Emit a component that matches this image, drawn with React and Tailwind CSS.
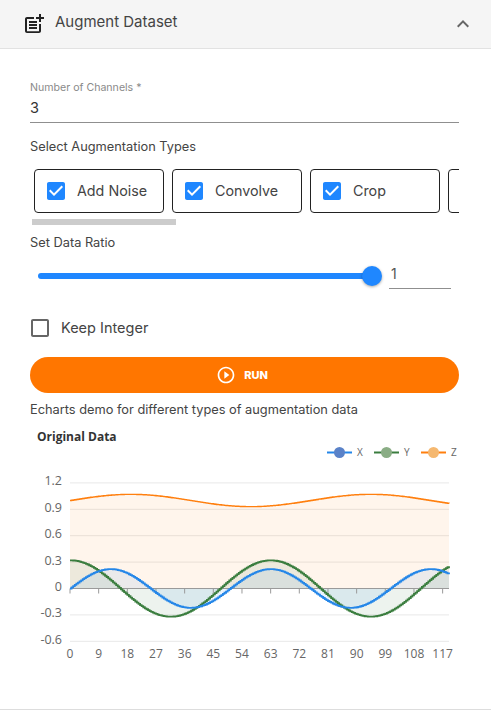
const X0 = 70;
const Y0 = 588.5;
const UNIT_X = 379 / 119;
const UNIT_Y = 88;

const toX = (i) => X0 + i * UNIT_X;
const toY = (v) => Y0 - v * UNIT_Y;

const series = [
  { name: "Z", fn: (i) => 1 + 0.07 * Math.sin(i / 12), line: "#ff7f0e", dot: "#f5b870", fill: "rgba(255,127,14,0.08)", width: 1.4 },
  { name: "Y", fn: (i) => 0.32 * Math.cos(i / 10), line: "#3a7d3e", dot: "#8aad85", fill: "rgba(58,125,62,0.09)", width: 1.8 },
  { name: "X", fn: (i) => 0.22 * Math.sin(i / 8), line: "#2486e8", dot: "#5a82c8", fill: "rgba(36,134,232,0.09)", width: 1.8 },
];

function stepPath(fn) {
  let d = `M${toX(0)} ${toY(fn(0))}`;
  for (let i = 0.5; i <= 119; i += 0.5) {
    d += `H${toX(i)}V${toY(fn(i))}`;
  }
  return d;
}

function Chart() {
  const yTicks = [1.2, 0.9, 0.6, 0.3, -0.3, -0.6];
  const xTicks = [];
  for (let i = 0; i <= 117; i += 9) xTicks.push(i);

  return (
    <svg width="491" height="256" viewBox="0 425 491 256" className="block">
      <text x="37" y="441" fontSize="12" fontWeight="700" fill="#333" fontFamily="'Open Sans', sans-serif">
        Original Data
      </text>

      {[{ s: series[2], x: 327 }, { s: series[1], x: 374 }, { s: series[0], x: 421 }].map(({ s, x }) => (
        <g key={s.name}>
          <line x1={x} x2={x + 25} y1="452.5" y2="452.5" stroke={s.line} strokeWidth="2" />
          <circle cx={x + 12.5} cy="452.5" r="5.5" fill={s.dot} />
          <text x={x + 30} y="455.5" fontSize="10" fill="#666" fontFamily="'Open Sans', sans-serif">
            {s.name}
          </text>
        </g>
      ))}

      {yTicks.map((v) => (
        <line key={v} x1={X0} x2="449" y1={toY(v)} y2={toY(v)} stroke="#e8e8e8" />
      ))}

      {series.map((s) => (
        <path key={s.name} d={`${stepPath(s.fn)}V${Y0}H${X0}Z`} fill={s.fill} />
      ))}

      <line x1={X0} x2="449" y1={Y0} y2={Y0} stroke="#9a9a9a" />
      {xTicks.map((i) => (
        <line key={i} x1={toX(i)} x2={toX(i)} y1={Y0} y2={Y0 + 5} stroke="#9a9a9a" />
      ))}

      {series.map((s) => (
        <path key={s.name} d={stepPath(s.fn)} fill="none" stroke={s.line} strokeWidth={s.width} />
      ))}

      {[1.2, 0.9, 0.6, 0.3, 0, -0.3, -0.6].map((v) => (
        <text key={v} x="62" y={toY(v) - 2 + 4.5} textAnchor="end" fontSize="12.5" fill="#666" fontFamily="'Open Sans', sans-serif">
          {v}
        </text>
      ))}
      {xTicks.map((i) => (
        <text key={i} x={toX(i)} y="658" textAnchor="middle" fontSize="12" fill="#666" fontFamily="'Open Sans', sans-serif">
          {i}
        </text>
      ))}
    </svg>
  );
}

function TypeCard({ label }) {
  return (
    <div className="flex h-[44px] w-[130px] shrink-0 items-center rounded-[4px] border border-[#222] pl-[9px]">
      <svg width="24" height="24" viewBox="0 0 24 24" fill="#1f87ff">
        <path d="M19 3H5c-1.11 0-2 .9-2 2v14c0 1.1.89 2 2 2h14c1.11 0 2-.9 2-2V5c0-1.1-.89-2-2-2zm-9 14l-5-5 1.41-1.41L10 14.17l7.59-7.59L19 8l-9 9z" />
      </svg>
      <span className="ml-[9px] text-[14.3px] text-[#444]">{label}</span>
    </div>
  );
}

export default function App() {
  return (
    <div className="h-[710px] w-[491px] overflow-hidden border-b border-[#ddd] bg-white [font-family:Inter,sans-serif]">
      <div className="flex h-[49px] items-center border-b border-[#e2e2e2] bg-[#f5f5f5] pl-[22px] pr-[16px]">
        <svg width="24" height="24" viewBox="0 0 24 24" fill="#222">
          <path d="M17 19.22H5V7h7V5H5c-1.1 0-2 .9-2 2v12c0 1.1.9 2 2 2h12c1.1 0 2-.9 2-2v-7h-2v7.22zM19 2h-2v3h-3c.01.01 0 2 0 2h3v2.99c.01.01 2 0 2 0V7h3V5h-3V2zM7 9h8v2H7zM7 12v2h8v-2h-3zM7 15h8v2H7z" />
        </svg>
        <span className="ml-[9px] flex-1 pb-[3px] text-[15px] text-[#444]">Augment Dataset</span>
        <svg width="24" height="24" viewBox="0 0 24 24" fill="#666">
          <path d="M12 8l-6 6 1.41 1.41L12 10.83l4.59 4.58L18 14z" />
        </svg>
      </div>

      <div className="px-[30px] pr-[32px]">
        <div className="mt-[32px] border-b border-[#8f8f8f] pb-[4px]">
          <div className="text-[10.6px] leading-[14px] text-[#8a8a8a]">Number of Channels *</div>
          <div className="mt-[3px] text-[14.5px] leading-[20px] text-[#333]">3</div>
        </div>

        <div className="mt-[16px] text-[12.8px] leading-[16px] text-[#444]">Select Augmentation Types</div>

        <div className="mt-[14px] flex gap-[8px] overflow-hidden pl-[4px]">
          <TypeCard label="Add Noise" />
          <TypeCard label="Convolve" />
          <TypeCard label="Crop" />
          <TypeCard label="" />
        </div>
        <div className="ml-[2px] mt-[6px] h-[6px] w-[144px] bg-[#cccccc]" />

        <div className="mt-[10px] text-[12.8px] leading-[16px] text-[#444]">Set Data Ratio</div>

        <div className="mt-[8px] flex items-start">
          <div className="relative mt-[14px] ml-[8px] h-[6px] w-[335px] rounded-full bg-[#1f87ff]">
            <div className="absolute right-[-9px] top-[-7px] h-[20px] w-[20px] rounded-full bg-[#1f87ff] shadow-[0_1px_3px_rgba(0,0,0,0.35)]" />
          </div>
          <div className="ml-[16px] h-[30px] w-[62px] border-b border-[#8f8f8f] pl-[2px] pt-[5px] text-[14px] leading-[20px] text-[#555]">
            1
          </div>
        </div>

        <div className="mt-[27px] flex items-center">
          <svg width="24" height="24" viewBox="0 0 24 24" fill="#666" className="-ml-[2px]">
            <path d="M19 5v14H5V5h14m0-2H5c-1.1 0-2 .9-2 2v14c0 1.1.9 2 2 2h14c1.1 0 2-.9 2-2V5c0-1.1-.89-2-2-2z" />
          </svg>
          <span className="ml-[9px] text-[14.5px] text-[#444]">Keep Integer</span>
        </div>

        <div className="mt-[17px] flex h-[36px] items-center justify-center rounded-full bg-[#ff7600] pr-[5px] text-white">
          <svg width="20" height="20" viewBox="0 0 24 24" fill="#fff">
            <path d="M10 16.5l6-4.5-6-4.5v9zM12 2C6.48 2 2 6.48 2 12s4.48 10 10 10 10-4.48 10-10S17.52 2 12 2zm0 18c-4.41 0-8-3.59-8-8s3.59-8 8-8 8 3.59 8 8-3.59 8-8 8z" />
          </svg>
          <span className="ml-[8px] text-[11px] font-extrabold">RUN</span>
        </div>

        <div className="mt-[9px] text-[12.8px] leading-[16px] text-[#444]">Echarts demo for different types of augmentation data</div>
      </div>

      <div className="mt-[7px]">
        <Chart />
      </div>
    </div>
  );
}
